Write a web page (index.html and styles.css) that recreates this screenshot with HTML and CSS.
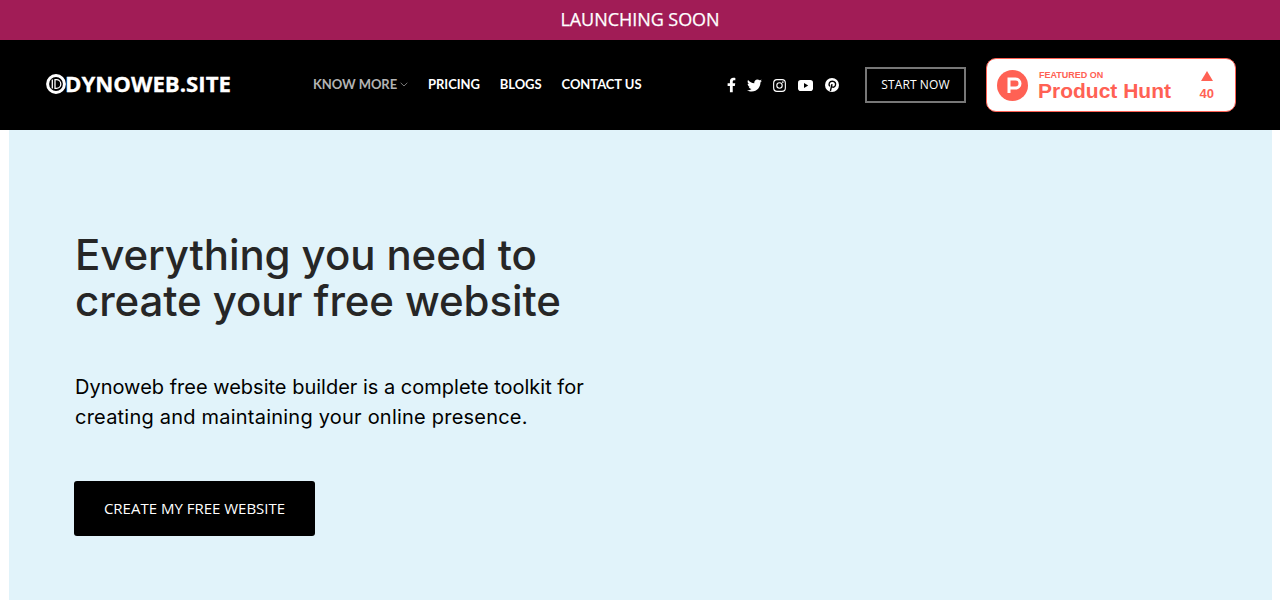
FILE: index.html
```html
<!DOCTYPE html>
<html lang="en">
<head>
<meta charset="utf-8">
<title>Dynoweb</title>
<link rel="stylesheet" href="styles.css">
</head>
<body>
<div class="banner">LAUNCHING SOON</div>
<header class="header">
  <a class="logo" href="#">
    <svg class="logo-mark" viewBox="0 0 20 20" width="20" height="20" aria-hidden="true">
      <circle cx="10" cy="10" r="8.400" fill="none" stroke="#fff" stroke-width="3"/>
      <path d="M9 5.600h1.400a4.400 4.400 0 0 1 0 8.800H9z" fill="none" stroke="#fff" stroke-width="1.300"/>
      <path d="M6.300 5.600v8.800" stroke="#fff" stroke-width="1.300"/>
    </svg>
    <span>DYNOWEB.SITE</span>
  </a>
  <nav class="nav">
    <a class="nav-link is-muted" href="#">KNOW MORE<svg class="caret" viewBox="0 0 8 5" width="8" height="5" aria-hidden="true"><path d="M.7.800 4 4 7.300.800" fill="none" stroke="#777" stroke-width="1"/></svg></a>
    <a class="nav-link" href="#">PRICING</a>
    <a class="nav-link" href="#">BLOGS</a>
    <a class="nav-link" href="#">CONTACT US</a>
  </nav>
  <div class="social">
    <svg width="9" height="16" viewBox="0 0 320 512" aria-hidden="true"><path fill="#fff" d="M279 288l14-93h-89v-60c0-25 12-50 52-50h41V6S260 0 225 0c-73 0-121 44-121 125v70H22v93h82v224h100V288z"/></svg>
    <svg width="15" height="13" viewBox="0 0 512 416" aria-hidden="true"><path fill="#fff" d="M459 104c0 5 0 9 0 14 0 139-106 298-298 298-59 0-114-17-161-47 8 1 17 1 25 1 49 0 94-17 130-45-46-1-85-31-98-73 7 1 13 2 20 2 9 0 19-1 28-4-48-10-84-52-84-103v-1c14 8 30 13 47 13-28-19-47-51-47-87 0-19 5-37 14-52 52 63 129 105 216 109-2-8-3-16-3-24 0-58 47-105 105-105 30 0 57 13 77 33 24-5 46-14 67-26-8 24-25 45-46 58 21-2 41-8 60-16-14 21-32 39-52 54z"/></svg>
    <svg width="13" height="13" viewBox="0 0 14 14" aria-hidden="true"><rect x=".7" y=".7" width="12.600" height="12.600" rx="3.600" fill="none" stroke="#fff" stroke-width="1.200"/><circle cx="7" cy="7" r="2.900" fill="none" stroke="#fff" stroke-width="1.200"/><circle cx="10.600" cy="3.400" r=".85" fill="#fff"/></svg>
    <svg width="15" height="11" viewBox="0 0 15 11" aria-hidden="true"><rect width="15" height="11" rx="2.800" fill="#fff"/><path d="M6 3v5l4.200-2.500z" fill="#000"/></svg>
    <svg width="14" height="14" viewBox="0 0 14 14" aria-hidden="true"><circle cx="7" cy="7" r="7" fill="#fff"/><path d="M5.400 13 7 6.200M4.800 8.400C3.200 6.400 4.300 3.200 7.300 3.200c2.700 0 3.800 2.100 3.100 4.200C9.800 9.300 7.700 9.800 6.600 8.400" fill="none" stroke="#000" stroke-width="1.400"/></svg>
  </div>
  <a class="start" href="#">START NOW</a>
  <a class="ph" href="#">
    <svg class="ph-mark" viewBox="0 0 31 31" width="31" height="31" aria-hidden="true"><circle cx="15.500" cy="15.500" r="15.500" fill="#ff6154"/><path d="M12 23V9h6.500a4.500 4.500 0 0 1 0 9H12" fill="none" stroke="#fff" stroke-width="3"/></svg>
    <span class="ph-text"><small>FEATURED ON</small><b>Product Hunt</b></span>
    <span class="ph-votes"><svg viewBox="0 0 12 10" width="12" height="10" aria-hidden="true"><path d="M6 0l6 10H0z" fill="#ff6154"/></svg><b>40</b></span>
  </a>
</header>
<main class="hero">
  <h1>Everything you need to<br>create your free website</h1>
  <p>Dynoweb free website builder is a complete toolkit for<br><span class="p-line">creating and maintaining your online presence.</span></p>
  <a class="cta" href="#">CREATE MY FREE WEBSITE</a>
</main>
</body>
</html>
```
FILE: styles.css
```css
* { box-sizing: border-box; }
html, body { margin: 0; height: 600px; overflow: hidden; background: #fff; }
a { text-decoration: none; color: inherit; }
.banner {
  height: 40px; background: #a11c56; color: #fff;
  font: 500 18px/38px "Open Sans", sans-serif; text-align: center; letter-spacing: -.05px; -webkit-text-stroke: .25px #fff;
}
.header {
  height: 90px; background: #000; display: flex; align-items: center;
  padding: 0 44px 0 46px;
}
.logo {
  display: flex; align-items: center; width: 267px; color: #fff;
  font: 700 22.200px/1 "Open Sans", sans-serif; margin-top: -2px; -webkit-text-stroke: .3px #fff;
}
.logo-mark { flex: none; margin-right: -1px; }
.nav { display: flex; gap: 20px; width: 414px; font: 700 13px/1 Lato, sans-serif; color: #fff; margin-top: -2px; letter-spacing: -.06px; }
.nav-link { display: flex; align-items: center; }
.is-muted { color: #b3b3b3; }
.caret { margin-left: 3px; }
.social { display: flex; align-items: center; gap: 12px; width: 138px; }
.social svg:first-child { margin-right: -1px; }
.social svg:nth-child(2) { margin-right: -1px; }
.start {
  width: 101px; height: 36px; border: 2px solid #777; color: #fff;
  font: 400 12px/32px "Open Sans", sans-serif; text-align: center; margin-right: 20px; letter-spacing: .1px;
}
.ph {
  width: 250px; height: 54px; background: #fff; border: 1px solid #ff6154; border-radius: 10px;
  display: flex; align-items: center; padding: 0 21px 0 10px; color: #ff6154;
  font-family: "Liberation Sans", sans-serif;
}
.ph-text { display: flex; flex-direction: column; margin-left: 10px; flex: 1; padding-top: 2px; }
.ph-text small { font-size: 9px; font-weight: 700; line-height: 10px; margin-left: 1px; }
.ph-text b { font-size: 21px; line-height: 22px; }
.ph-votes { display: flex; flex-direction: column; align-items: center; gap: 6px; font-size: 13px; line-height: 13px; }
.hero { height: 470px; margin: 0 8px 0 9px; background: #e1f3fa; padding: 102px 0 0 66px; }
h1 { margin: 0; font: 500 42px/46px Inter, sans-serif; color: #262626; letter-spacing: -.1px; }
.hero p { margin: 48px 0 0; font: 400 20px/30px Inter, sans-serif; color: #000; }
.p-line { letter-spacing: .22px; }
.cta {
  display: block; width: 241px; height: 55px; margin: 49px 0 0 -1px; background: #000; color: #fff;
  border-radius: 3px; font: 400 15px/54px "Open Sans", sans-serif; text-align: center;
}
```
